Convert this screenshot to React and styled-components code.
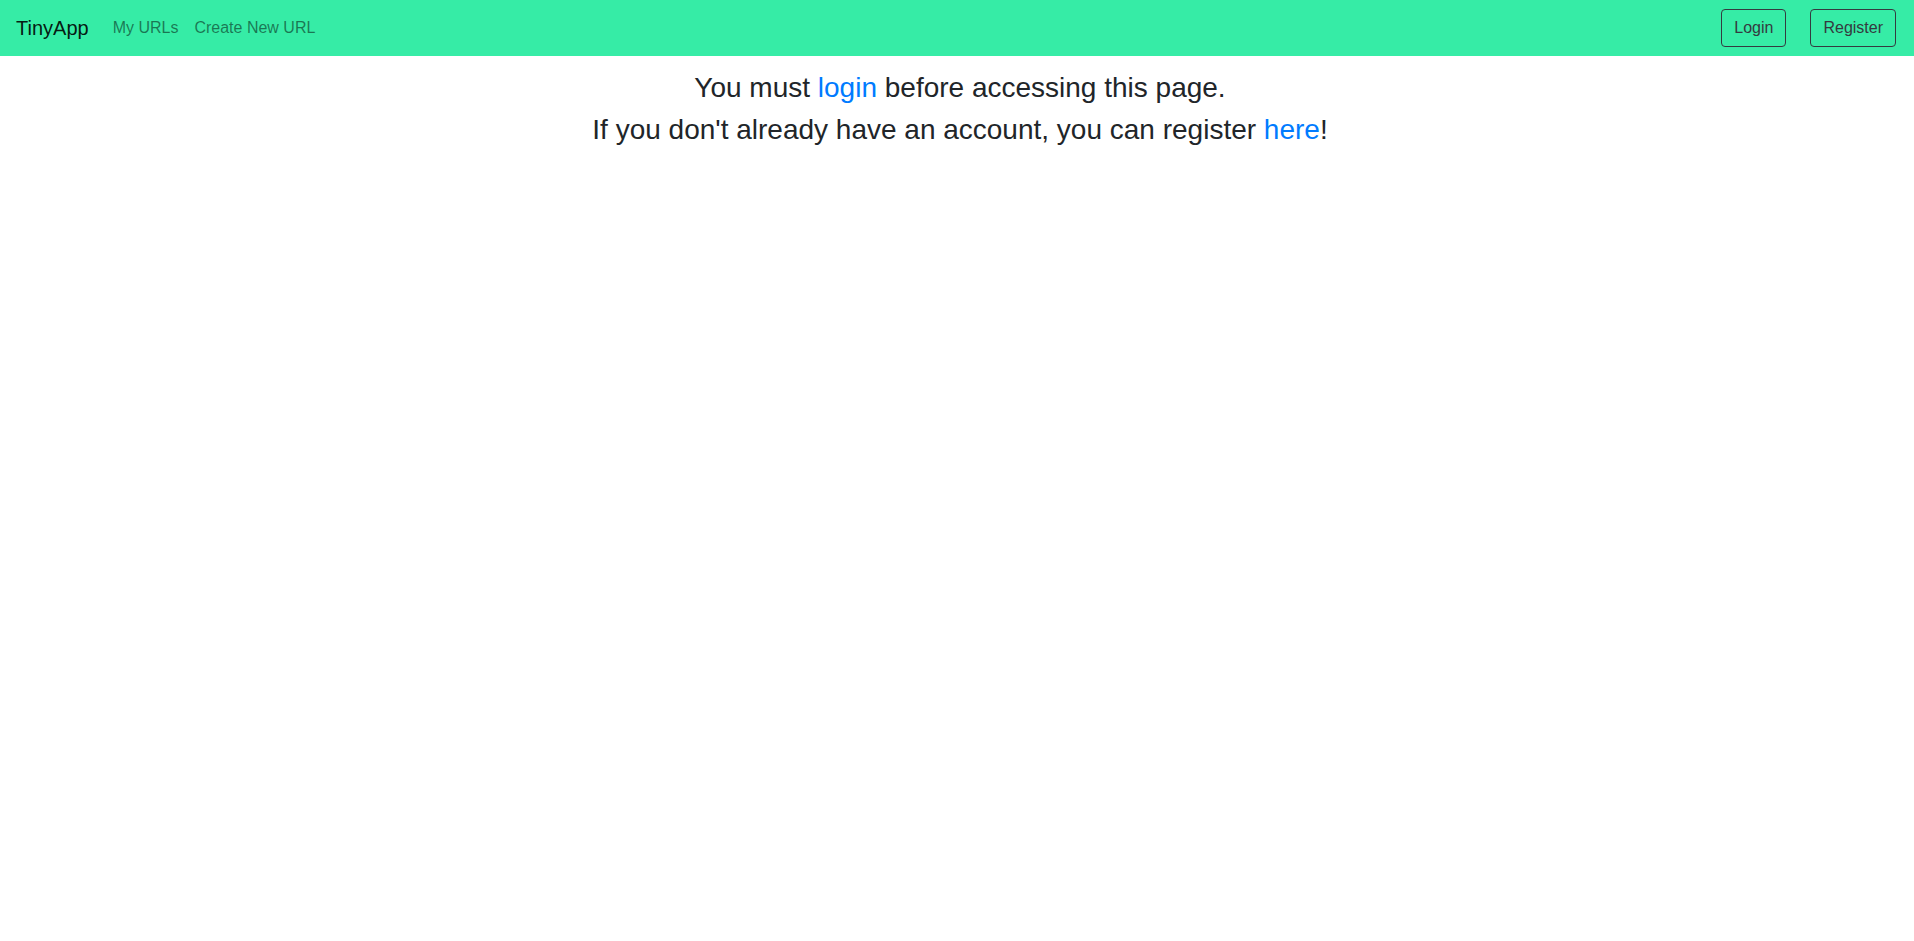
import React from 'react';
import styled, { createGlobalStyle } from 'styled-components';

const GlobalStyle = createGlobalStyle`
  body {
    margin: 0;
    font-family: "Liberation Sans", Arial, sans-serif;
    color: #212529;
    background: #ffffff;
  }
`;

const Navbar = styled.nav`
  display: flex;
  align-items: center;
  height: 56px;
  padding: 0 18px 0 16px;
  box-sizing: border-box;
  background-color: #36eca6;
`;

const Brand = styled.a`
  font-size: 20px;
  color: rgba(0, 0, 0, 0.9);
  text-decoration: none;
  margin-right: 16px;
`;

const NavLinks = styled.div`
  display: flex;
  flex: 1;
`;

const NavLink = styled.a`
  font-size: 16px;
  color: rgba(0, 0, 0, 0.5);
  text-decoration: none;
  padding: 8px;
`;

const Actions = styled.div`
  display: flex;
  gap: 24px;
`;

const OutlineButton = styled.button`
  font-family: inherit;
  font-size: 16px;
  color: #343a40;
  background: transparent;
  border: 1px solid #343a40;
  border-radius: 4px;
  height: 38px;
  padding: 0 12px;
  cursor: pointer;
`;

const Message = styled.main`
  text-align: center;
  padding: 15px 0 0 6px;
`;

const Line = styled.h3`
  font-size: 28px;
  font-weight: 400;
  line-height: 1.2;
  margin: 0 0 8px;
`;

const Link = styled.a`
  color: #007bff;
  text-decoration: none;
`;

export default function App() {
  return (
    <>
      <GlobalStyle />
      <Navbar>
        <Brand href="#">TinyApp</Brand>
        <NavLinks>
          <NavLink href="#">My URLs</NavLink>
          <NavLink href="#">Create New URL</NavLink>
        </NavLinks>
        <Actions>
          <OutlineButton>Login</OutlineButton>
          <OutlineButton>Register</OutlineButton>
        </Actions>
      </Navbar>
      <Message>
        <Line>You must <Link href="#">login</Link> before accessing this page.</Line>
        <Line>If you don't already have an account, you can register <Link href="#">here</Link>!</Line>
      </Message>
    </>
  );
}
